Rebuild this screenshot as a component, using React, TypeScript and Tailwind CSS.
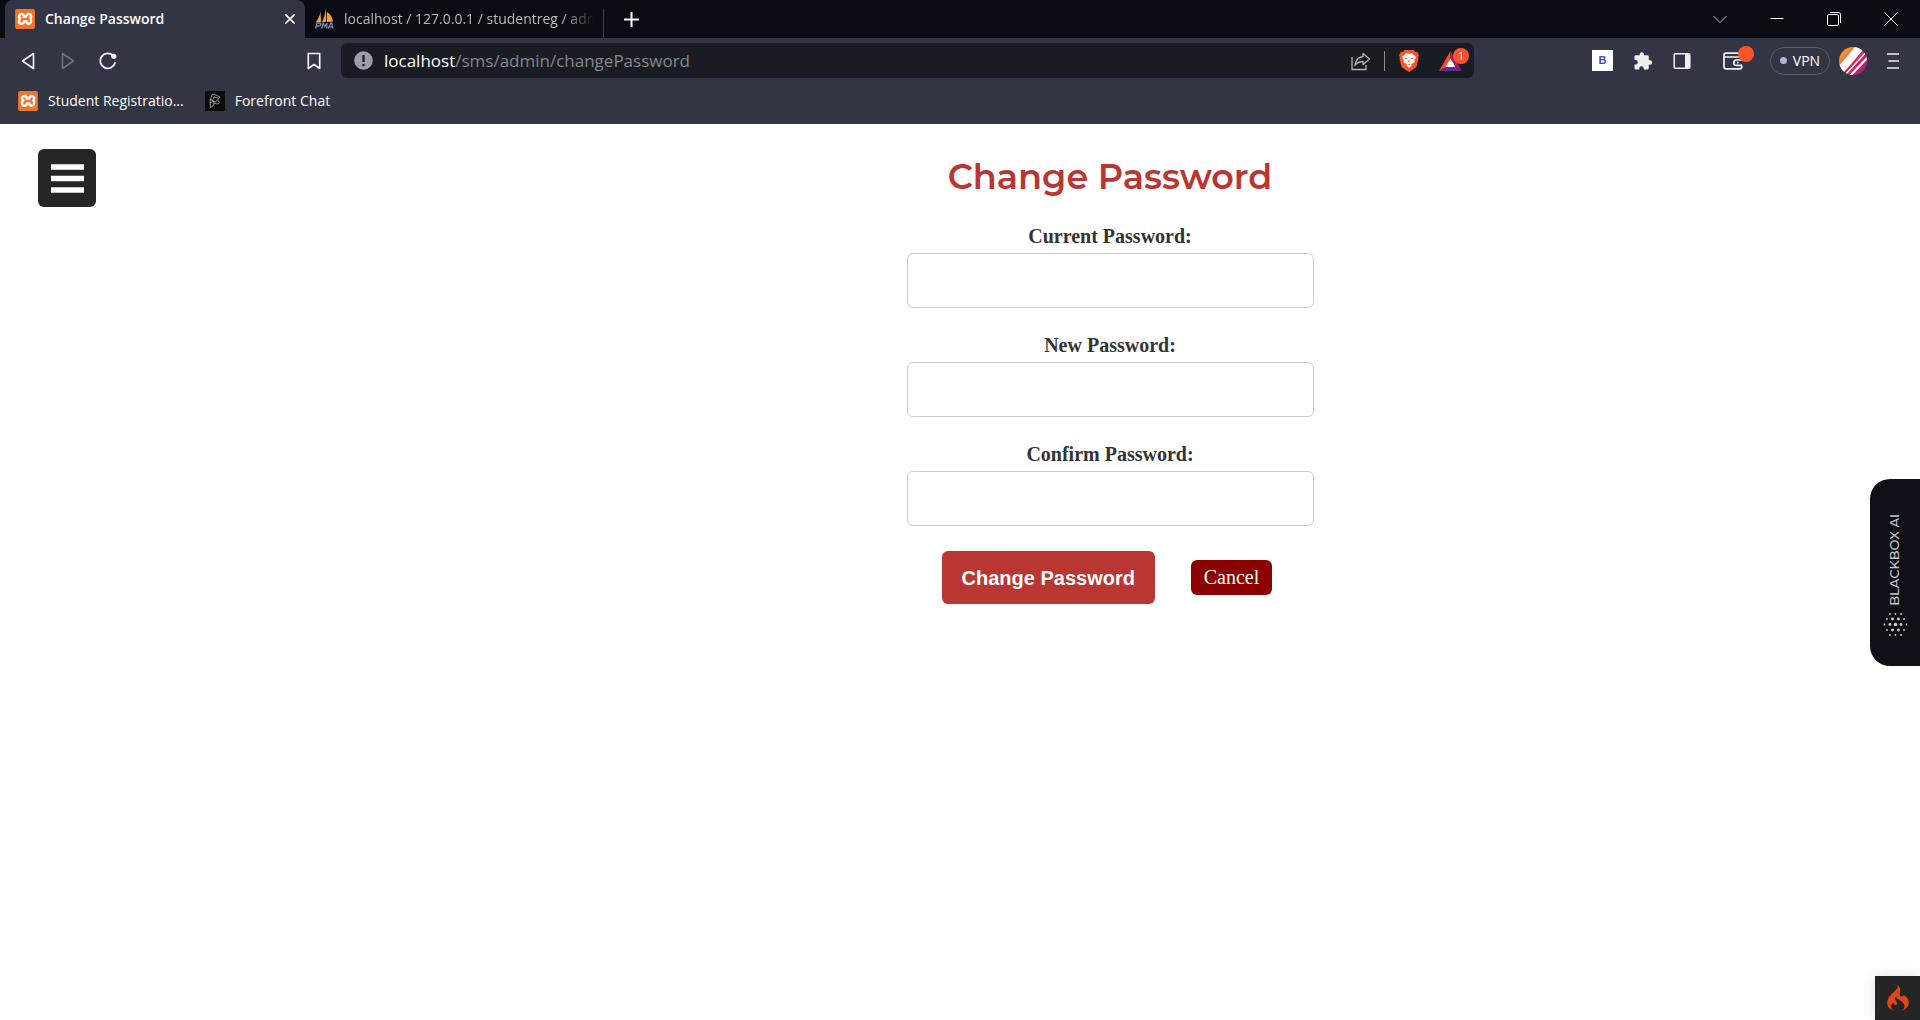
import { SiCodeigniter, SiXampp } from "react-icons/si";

const XamppIcon = () => (
  <SiXampp
    aria-hidden="true"
    className="size-5 shrink-0 bg-[linear-gradient(white,white)] bg-[length:16px_16px] bg-center bg-no-repeat text-[#f4752a]"
  />
);

const PhpMyAdminIcon = () => (
  <svg viewBox="0 0 20 20" className="size-5 shrink-0" aria-hidden="true">
    <path d="M6.500 2.500 7 13H2C4 10 6 7 6.500 2.500Z" fill="#f8a13a" />
    <path d="M11.500 0c1 4 1 9 .3 13H8C10 9 11.300 5 11.500 0Z" fill="#f89c0e" />
    <path d="M13 3c3 2 5.500 5 6 9.500l-6 .5Z" fill="#f8a13a" />
    <path
      d="M1.500 19.500 3 14h2.500q1.500 0 1.300 1.400T5 17H2.500M8 19.500 9.200 14l1.600 3.500L13 14l-.4 5.500M14 19.500l3-5.500h.8l1 5.500M15 17.800h3.500"
      fill="none"
      stroke="#8488b8"
      strokeWidth="1.300"
    />
  </svg>
);

const ForefrontIcon = () => (
  <svg viewBox="0 0 20 20" className="size-5 shrink-0" fill="none" stroke="#b5b5b5" strokeWidth=".8" strokeLinejoin="round" aria-hidden="true">
    <rect width="20" height="20" fill="#0b0b0b" stroke="none" />
    <path d="M7 3.500 11 4l4 2-2.500 3-2 2-3-1.500-2-1ZM5 8l.5 8.500 3-2 .5-2.500 3.500 1 2-1.500-2-2.500M7.500 9.500 9 6l4 1M5 12l4-2M9 12l-1-2" />
  </svg>
);

const BraveIcon = () => (
  <svg viewBox="0 0 20 23" className="h-[23px] w-5" aria-hidden="true">
    <path d="M5.500 1h9l1.800 2 1.700-.2L20 6l-.8 2.500.3 1.500-2.200 8L13 21.300 10 23l-3-1.700L2.700 18 .5 10l.3-1.500L0 6l2-3.200 1.700.2Z" fill="#fb542b" />
    <path
      d="M10 4.800 7 4.200 3 8l1.500 3 .2 2.500 3 1.500-.2 1.800 2.500 2 2.500-2-.2-1.800 3-1.500.2-2.500L17 8l-4-3.800Z"
      fill="#fff"
    />
    <path d="m5 8.800 3.200.2.300.8-1.700.3Zm10 0-3.200.2-.3.800 1.700.3ZM9.500 11h1l.2 2-.7.600-.7-.6ZM8.800 15.300l1.200-.5 1.200.5-1.200 1Z" fill="#fb542b" />
  </svg>
);

const BatIcon = () => (
  <svg viewBox="0 0 23 20" className="h-5 w-[23px]" aria-hidden="true">
    <path d="M11.500 0 0 20l7.500-4.500 4-7.500Z" fill="#ff4724" />
    <path d="M11.500 0 23 20l-7.500-4.500-4-7.500Z" fill="#9e1f63" />
    <path d="M0 20h23l-7.500-4.500h-8Z" fill="#662d91" />
    <path d="m11.500 7.500 5 8.500h-10Z" fill="#fff" />
  </svg>
);

const dots: [number, number[]][] = [
  [2, [7, 12.5, 18]],
  [7, [4, 9.5, 15.5, 21]],
  [12.5, [1.5, 7, 12.5, 18, 23.5]],
  [18, [4, 9.5, 15.5, 21]],
  [23, [7, 12.5, 18]],
];

const DotsIcon = () => (
  <svg viewBox="0 0 25 25" className="size-[25px]" fill="#d0d0d3" aria-hidden="true">
    {dots.map(([y, xs]) =>
      xs.map((x) => {
        const d = Math.hypot(x - 12.5, y - 12.5);
        return <circle key={`${x}-${y}`} cx={x} cy={y} r={d < 2 ? 1.8 : d < 8 ? 1.4 : 0.9} />;
      })
    )}
  </svg>
);

const Field = ({ id, label }: { id: string; label: string }) => (
  <div className="mb-[25px] w-full">
    <label htmlFor={id} className="mb-[5px] block text-center text-xl leading-6 font-bold text-[#333]">
      {label}
    </label>
    <input
      id={id}
      type="password"
      className="block h-[55px] w-full rounded-md border border-[#ccc] bg-white px-3 font-['Liberation_Sans',sans-serif] text-base outline-none"
    />
  </div>
);

function TabStrip() {
  return (
    <div className="flex h-[38px] items-stretch bg-[#0b0b14] pl-[5px]">
      <div className="flex w-[300px] items-center rounded-t-lg bg-[#323544] px-2.5">
        <XamppIcon />
        <span className="ml-2.5 flex-1 text-sm font-semibold whitespace-nowrap text-white">Change Password</span>
        <button aria-label="Close tab" className="text-white">
          <svg viewBox="0 0 10 10" className="size-2.5" stroke="currentColor" strokeWidth="1.600">
            <path d="M0 0l10 10M10 0 0 10" />
          </svg>
        </button>
      </div>
      <div className="flex w-[298px] items-center pl-[9px]">
        <PhpMyAdminIcon />
        <span className="ml-2.5 [mask-image:linear-gradient(to_right,black_88%,transparent)] text-sm whitespace-nowrap text-[#b8b8bd]">
          localhost / 127.0.0.1 / studentreg / adn
        </span>
      </div>
      <div className="mt-[9px] w-px bg-[#3f404a]" />
      <button aria-label="New tab" className="ml-5 text-white">
        <svg viewBox="0 0 15 15" className="size-[15px]" stroke="currentColor" strokeWidth="2">
          <path d="M7.500 0v15M0 7.500h15" />
        </svg>
      </button>
      <div className="ml-auto flex items-stretch pr-px text-white [&>button]:grid [&>button]:w-[57px] [&>button]:place-items-center">
        <button aria-label="Search tabs">
          <svg viewBox="0 0 14 14" className="size-3.5" fill="none" stroke="#c9c9cf">
            <path d="m.5 4 6.500 6.500L13.500 4" />
          </svg>
        </button>
        <button aria-label="Minimize">
          <svg viewBox="0 0 14 14" className="size-3.5" fill="none" stroke="currentColor">
            <path d="M.5 6.500h13" />
          </svg>
        </button>
        <button aria-label="Restore">
          <svg viewBox="0 0 14 14" className="size-3.5" fill="none" stroke="currentColor">
            <rect x=".5" y="2.500" width="11" height="11" rx="1.500" />
            <path d="M3 .5h8.500q2 0 2 2V11" />
          </svg>
        </button>
        <button aria-label="Close">
          <svg viewBox="0 0 14 14" className="size-3.5" fill="none" stroke="currentColor">
            <path d="m.5.5 13 13M13.500.5l-13 13" />
          </svg>
        </button>
      </div>
    </div>
  );
}

function AddressBar() {
  return (
    <div className="flex h-[35px] flex-1 items-center rounded-md bg-[#191c23] pr-3 pl-[13px]">
      <svg viewBox="0 0 19 19" className="size-[19px] shrink-0" aria-hidden="true">
        <circle cx="9.500" cy="9.500" r="9.300" fill="#9b9eaa" />
        <path d="M9.500 4v7M9.500 13v2.200" stroke="#191c23" strokeWidth="2.200" />
      </svg>
      <div className="ml-[11px] flex-1 text-[17px] whitespace-nowrap text-[#85878c]">
        <span className="text-white">localhost</span>/sms/admin/changePassword
      </div>
      <button aria-label="Share">
        <svg viewBox="0 0 20 20" className="size-5" fill="none" stroke="#b4b5b9" strokeWidth="1.300">
          <path d="M1 6v12.500h14V14" />
          <path d="M12 2.500 18.500 8 12 13.500v-3C8 10.500 6 11.500 4 14.500c.5-5 3.500-8.500 8-9Z" strokeLinejoin="round" />
        </svg>
      </button>
      <div className="ml-[13px] h-5 w-px bg-[#8b8d92]" />
      <button aria-label="Brave Shields" className="ml-3.5">
        <BraveIcon />
      </button>
      <button aria-label="Brave Rewards" className="relative ml-5">
        <BatIcon />
        <span className="absolute -top-[3px] left-3.5 grid size-4 place-items-center rounded-full bg-[#fb542b] text-[10px] leading-none text-white">
          1
        </span>
      </button>
    </div>
  );
}

function Toolbar() {
  return (
    <div className="flex h-[45px] items-center">
      <div className="flex w-[341px] shrink-0 items-center pr-5 pl-[21px]">
        <button aria-label="Back">
          <svg viewBox="0 0 14 18" className="h-[18px] w-3.5" fill="none" stroke="#f2f2f4" strokeWidth="1.600" strokeLinejoin="round">
            <path d="M12.500 1.500v15L1.500 9Z" />
          </svg>
        </button>
        <button aria-label="Forward" className="ml-[26px]">
          <svg viewBox="0 0 14 18" className="h-[18px] w-3.5" fill="none" stroke="#6f717c" strokeWidth="1.600" strokeLinejoin="round">
            <path d="M1.500 1.500v15L12.500 9Z" />
          </svg>
        </button>
        <button aria-label="Reload" className="ml-6">
          <svg viewBox="0 0 18 18" className="size-[18px]" fill="none" stroke="#f2f2f4" strokeWidth="1.800">
            <path d="M14 3.500A7.500 7.500 0 1 0 16 11" strokeLinecap="round" />
            <circle cx="14.800" cy="4.300" r="2.600" fill="#f2f2f4" stroke="none" />
          </svg>
        </button>
        <button aria-label="Bookmark this page" className="ml-auto">
          <svg viewBox="0 0 14 18" className="h-[18px] w-3.5" fill="none" stroke="#f2f2f4" strokeWidth="1.700" strokeLinejoin="round">
            <path d="M1.300 1.500h11.400v15L7 12.500l-5.700 4Z" />
          </svg>
        </button>
      </div>
      <AddressBar />
      <div className="flex w-[446px] shrink-0 items-center justify-end pr-[21px]">
        <button aria-label="Blackbox extension" className="grid size-[21px] place-items-center bg-white font-['Liberation_Sans',sans-serif] text-[11px] leading-none font-bold text-[#4b45c0]">
          B
        </button>
        <button aria-label="Extensions" className="ml-5">
          <svg viewBox="0 0 20 20" className="size-5" fill="#f0f0f2">
            <path d="M17 9.300h-1.200V5.700c0-.9-.7-1.500-1.500-1.500H11V3a2.200 2.200 0 0 0-4.300 0v1.200H3c-.9 0-1.500.7-1.500 1.500v3.200h1a2.300 2.300 0 0 1 0 4.600h-1V17c0 .9.600 1.500 1.500 1.500h3.200v-1a2.300 2.300 0 0 1 4.600 0v1h3.500c.8 0 1.500-.6 1.500-1.500v-3.300H17a2.200 2.200 0 0 0 0-4.400Z" />
          </svg>
        </button>
        <button aria-label="Sidebar" className="ml-5">
          <svg viewBox="0 0 18 18" className="size-[18px]" fill="none" stroke="#f0f0f2" strokeWidth="1.500">
            <rect x="1.200" y="1.700" width="15.600" height="14.600" rx="1" />
            <path d="M12 2h5v14h-5Z" fill="#f0f0f2" stroke="none" />
          </svg>
        </button>
        <button aria-label="Wallet" className="relative ml-8">
          <svg viewBox="0 0 20 18" className="h-[18px] w-5" fill="none" stroke="#f0f0f2" strokeWidth="1.700">
            <path d="M18.800 8V6.500q0-1.500-1.500-1.500H1M18.800 13.500v1.300q0 2-2 2H3q-2 0-2-2V3.200q0-2 2-2h13" />
            <path d="M19 8h-5.500a2.700 2.700 0 0 0 0 5.400H19M14 10.700h1.500" />
          </svg>
          <span className="absolute -top-1.5 left-[15px] size-4 rounded-full bg-[#ff5327]" />
        </button>
        <button className="ml-[27px] flex h-7 w-[60px] items-center justify-center gap-1.5 rounded-full border border-[#5c5f71] text-sm text-white">
          <span className="size-[7px] rounded-full bg-[#b3b4cb]" />
          VPN
        </button>
        <button aria-label="Profile" className="ml-[9px]">
          <svg viewBox="0 0 28 28" className="size-7">
            <defs>
              <linearGradient id="avatar" x1="0" y1="0" x2="1" y2="1">
                <stop offset="0" stopColor="#fbb034" />
                <stop offset=".4" stopColor="#ee6b3b" />
                <stop offset=".55" stopColor="#dc1e50" />
                <stop offset="1" stopColor="#93278f" />
              </linearGradient>
              <clipPath id="disc">
                <circle cx="14" cy="14" r="14" />
              </clipPath>
            </defs>
            <g clipPath="url(#disc)" stroke="#fff">
              <rect width="28" height="28" fill="url(#avatar)" stroke="none" />
              <path d="M0 25 23-2" strokeWidth="8" />
              <path d="M6 28 29 3" strokeWidth="1.500" />
              <path d="M10 30 32 7" strokeWidth="2.200" />
            </g>
          </svg>
        </button>
        <button aria-label="Menu" className="ml-5">
          <svg viewBox="0 0 12 18" className="h-[18px] w-3" stroke="#f0f0f2" strokeWidth="1.600">
            <path d="M0 2h12M1.500 9H12M0 16h12" />
          </svg>
        </button>
      </div>
    </div>
  );
}

export default function App() {
  return (
    <div className="flex min-h-screen flex-col bg-white font-['Liberation_Serif',serif]">
      <header className="font-['Open_Sans',sans-serif]">
        <TabStrip />
        <div className="bg-[#323544] pb-[5px]">
          <Toolbar />
          <nav aria-label="Bookmarks" className="flex h-9 items-center pl-[18px] text-sm text-white">
            <a href="#student" className="flex items-center gap-2.5">
              <XamppIcon />
              Student Registratio...
            </a>
            <a href="#forefront" className="ml-[21px] flex items-center gap-2.5">
              <ForefrontIcon />
              Forefront Chat
            </a>
          </nav>
        </div>
      </header>

      <div className="flex flex-1 items-start">
        <aside className="w-[300px] shrink-0 pt-[25px] pl-[38px]">
          <button aria-label="Open menu" className="grid size-[58px] place-items-center rounded-md bg-[#262626]">
            <svg viewBox="0 0 33 29" className="h-[29px] w-[33px]" stroke="#fff" strokeWidth="5.500">
              <path d="M0 3h33M0 14.500h33M0 26h33" />
            </svg>
          </button>
        </aside>
        <main className="flex flex-1 flex-col items-center pt-[29px]">
          <h1 className="mb-[23px] font-['Montserrat','Inter',sans-serif] text-[35px] leading-[48px] font-semibold text-[#b93632]">
            Change Password
          </h1>
          <form className="w-[407px]" onSubmit={(e) => e.preventDefault()}>
            <Field id="current" label="Current Password:" />
            <Field id="new" label="New Password:" />
            <Field id="confirm" label="Confirm Password:" />
            <div className="flex items-center justify-center gap-9 pr-1.5">
              <button
                type="submit"
                className="h-[53px] w-[213px] rounded-md bg-[#b93632] font-['Liberation_Sans',sans-serif] text-xl font-bold text-white"
              >
                Change Password
              </button>
              <a href="#cancel" className="rounded-md bg-[#8b0000] px-[13px] py-1.5 text-xl leading-[23px] text-white">
                Cancel
              </a>
            </div>
          </form>
        </main>
      </div>

      <button className="fixed top-[479px] right-0 flex h-[187px] w-[50px] flex-col items-center justify-end gap-1.5 rounded-l-[20px] bg-[#0f1017] pb-[29px] font-['Montserrat','Inter',sans-serif] text-[13px] font-medium text-[#c4c4c8]">
        <span className="rotate-180 [writing-mode:vertical-rl]">BLACKBOX AI</span>
        <DotsIcon />
      </button>
      <button
        aria-label="Debug toolbar"
        className="fixed right-0 bottom-0 grid h-11 w-[45px] place-items-center bg-[#252525] text-[#dd4814] shadow-[0_0_12px_rgba(0,0,0,0.12)]"
      >
        <SiCodeigniter className="size-[26px]" />
      </button>
    </div>
  );
}
